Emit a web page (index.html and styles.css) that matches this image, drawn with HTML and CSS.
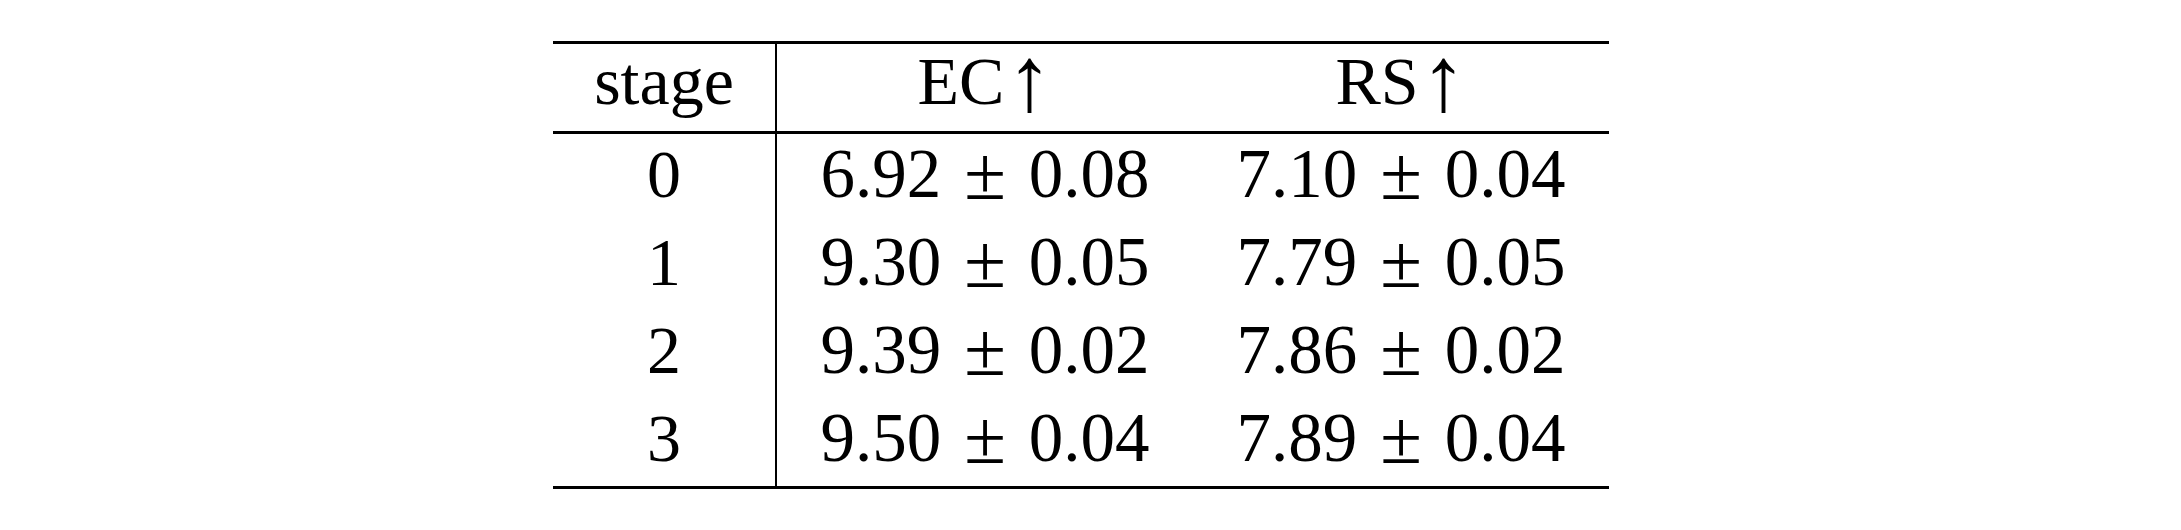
FILE: index.html
```html
<!DOCTYPE html>
<html lang="en">
<head>
<meta charset="utf-8">
<title>Stage results</title>
<link rel="stylesheet" href="styles.css">
</head>
<body>
<div class="page">
  <table class="results">
    <thead>
      <tr>
        <th class="c-stage">stage</th>
        <th class="c-val">EC<span class="arrow">↑</span></th>
        <th class="c-val">RS<span class="arrow">↑</span></th>
      </tr>
    </thead>
    <tbody>
      <tr>
        <td class="c-stage">0</td>
        <td class="c-val">6.92<span class="pm">±</span>0.08</td>
        <td class="c-val">7.10<span class="pm">±</span>0.04</td>
      </tr>
      <tr>
        <td class="c-stage">1</td>
        <td class="c-val">9.30<span class="pm">±</span>0.05</td>
        <td class="c-val">7.79<span class="pm">±</span>0.05</td>
      </tr>
      <tr>
        <td class="c-stage">2</td>
        <td class="c-val">9.39<span class="pm">±</span>0.02</td>
        <td class="c-val">7.86<span class="pm">±</span>0.02</td>
      </tr>
      <tr class="last">
        <td class="c-stage">3</td>
        <td class="c-val">9.50<span class="pm">±</span>0.04</td>
        <td class="c-val">7.89<span class="pm">±</span>0.04</td>
      </tr>
    </tbody>
  </table>
</div>
</body>
</html>
```

FILE: styles.css
```css
html, body {
  margin: 0;
  padding: 0;
  background: #ffffff;
}

.page {
  padding: 41px 0 0 553px;
}

.results {
  border-collapse: separate;
  border-spacing: 0;
  table-layout: fixed;
  font-family: "Liberation Serif", "Times New Roman", serif;
  font-size: 68px;
  color: #000000;
}

.results th,
.results td {
  box-sizing: border-box;
  padding: 0;
  text-align: center;
  font-weight: normal;
  white-space: nowrap;
}

.results th.c-stage,
.results td.c-stage {
  width: 224px;
  border-right: 2px solid #000000;
}

.results th.c-val,
.results td.c-val {
  width: 416px;
}

.results th {
  height: 93px;
  line-height: 75px;
  padding-bottom: 12px;
  border-top: 3px solid #000000;
  border-bottom: 3px solid #000000;
  vertical-align: top;
}

.results td {
  height: 88px;
  line-height: 80px;
  padding-bottom: 8px;
  vertical-align: top;
}

.results td.c-val {
  font-size: 69px;
}

.results tr.last td {
  height: 91px;
  padding-bottom: 8px;
  border-bottom: 3px solid #000000;
}

.pm {
  margin: 0 23px;
  font-size: 76px;
  line-height: 0;
  vertical-align: -2px;
}

.arrow {
  display: inline-block;
  font-size: 92px;
  line-height: 0;
  margin-left: 2px;
  transform: translateY(6px);
}
```
